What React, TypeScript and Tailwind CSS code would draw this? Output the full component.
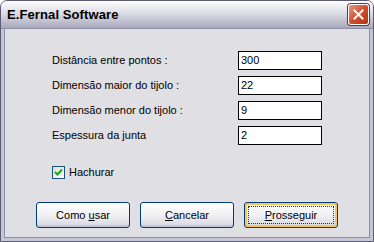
import React from "react";

const fields = [
  { label: "Distância entre pontos :", value: "300" },
  { label: "Dimensão maior do tijolo :", value: "22" },
  { label: "Dimensão menor do tijolo :", value: "9" },
  { label: "Espessura da junta", value: "2" },
];

function XpButton({ children, focused }: { children: React.ReactNode; focused?: boolean }) {
  return (
    <button
      className={
        "w-[94px] h-[26px] rounded-[3px] border border-[#003c74] bg-gradient-to-b from-white via-[#f1f1f4] to-[#d6d6e2] text-[11px] text-black p-0 " +
        (focused ? "shadow-[inset_0_0_0_2px_#f6c65a]" : "shadow-[inset_0_-2px_0_#c6c5d7]")
      }
    >
      {focused ? (
        <span className="flex items-center justify-center w-full h-full p-[3px]">
          <span className="flex items-center justify-center w-full h-full border border-dotted border-[#333]">
            {children}
          </span>
        </span>
      ) : (
        children
      )}
    </button>
  );
}

export default function App() {
  return (
    <div
      className="w-[374px] h-[242px] bg-[#e0dfe3] flex flex-col overflow-hidden rounded-t-[7px] border border-[#5b5b75]"
      style={{ fontFamily: '"Liberation Sans", Arial, sans-serif' }}
    >
      {/* title bar */}
      <div className="h-[28px] shrink-0 flex items-center justify-between pl-[6px] pr-[4px] bg-gradient-to-b from-white via-[#d8d8e2] to-[#a8a8bc] border-b border-[#8e8ea8]">
        <span className="text-[13px] font-bold text-black tracking-[0.1px]">E.Fernal Software</span>
        <div className="w-[21px] h-[21px] rounded-[3px] border border-white bg-gradient-to-br from-[#e49a86] via-[#d14d2e] to-[#b03217] flex items-center justify-center shadow-[0_0_0_1px_#8b2a14]">
          <svg width="11" height="11" viewBox="0 0 11 11">
            <path d="M1.5 1.5 L9.5 9.5 M9.5 1.5 L1.5 9.5" stroke="white" strokeWidth="2" strokeLinecap="square" />
          </svg>
        </div>
      </div>

      {/* body */}
      <div className="flex-1 flex border-x-[3px] border-b-[3px] border-[#c6c6d6]">
        <div className="flex-1 flex flex-col border border-t-0 border-[#8e8ea8] pl-[47px] pt-[22px]">
          <div className="flex flex-col gap-[6px]">
            {fields.map((f) => (
              <div key={f.label} className="flex items-center h-[19px]">
                <span className="w-[186px] text-[11px] text-black">{f.label}</span>
                <div className="w-[84px] h-[19px] bg-white border border-black flex items-center pl-[2px] text-[11px] text-black">
                  {f.value}
                </div>
              </div>
            ))}
          </div>

          <div className="flex items-center mt-[21px] h-[13px]">
            <div className="w-[13px] h-[13px] border border-[#1c5180] bg-gradient-to-br from-[#dcdcd7] to-white flex items-center justify-center">
              <svg width="9" height="9" viewBox="0 0 9 9">
                <path d="M1 4 L3.5 6.5 L8 1.5" stroke="#21a121" strokeWidth="2" fill="none" />
              </svg>
            </div>
            <span className="ml-[4px] text-[11px] text-black">Hachurar</span>
          </div>

          <div className="flex gap-[10px] mt-[23px] -ml-[16px]">
            <XpButton>
              Como <u>u</u>sar
            </XpButton>
            <XpButton>
              <u>C</u>ancelar
            </XpButton>
            <XpButton focused>
              <u>P</u>rosseguir
            </XpButton>
          </div>
        </div>
      </div>
    </div>
  );
}
